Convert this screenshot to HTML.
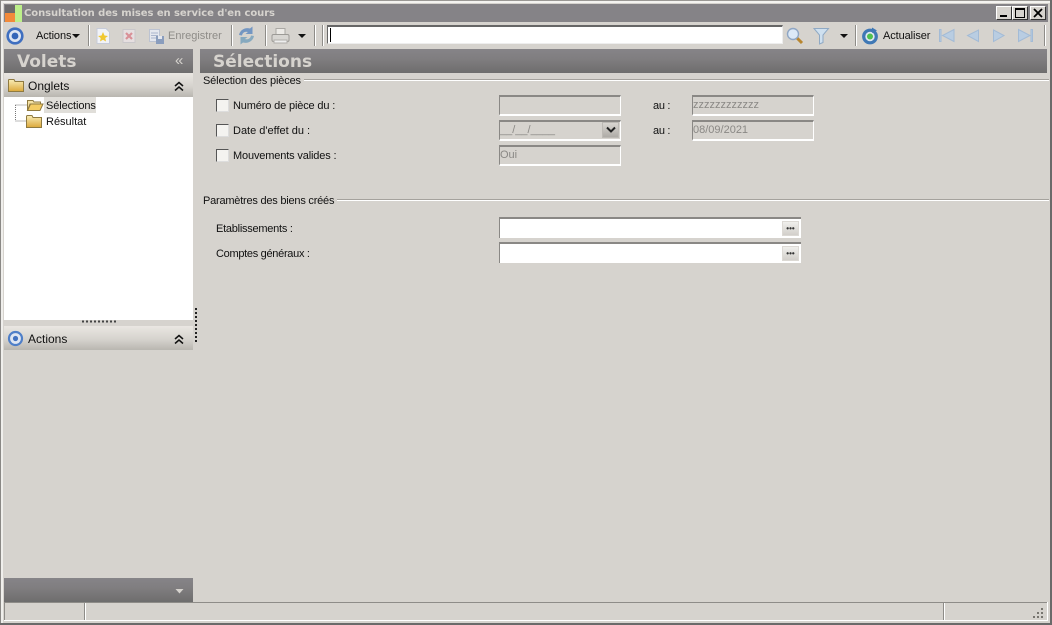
<!DOCTYPE html>
<html><head><meta charset="utf-8"><style>
html,body{margin:0;padding:0}
#r{position:relative;width:1052px;height:625px;overflow:hidden;background:#d6d3ce;font-family:"Liberation Sans",sans-serif;font-size:11px;color:#111}
#r div,#r svg,#r span.t{position:absolute}
.t{white-space:nowrap;line-height:14px}
.sep{top:25px;width:1px;height:21px;background:#8e8c88;border-right:1px solid #fff}
.hd{background:linear-gradient(#868488,#807e80 40%,#6e6d6d)}
.sub{background:linear-gradient(#eae7e2,#d6d3ce 55%,#b9b6b0)}
.ht{font-family:"DejaVu Sans",sans-serif;font-weight:bold;font-size:17px;color:#d6d3ce;line-height:22px;white-space:nowrap}
.in{box-sizing:border-box;background:#d6d3ce;border:1px solid #fff;border-top:2px solid #8a8885;border-left:1px solid #8a8885;border-bottom:2px solid #fff;height:21px;width:122px;color:#8a8885;font-size:11px;line-height:17px;padding-left:0}
.inw{box-sizing:border-box;background:#fff;border-top:2px solid #8a8885;border-left:1px solid #8a8885;height:21px;width:302px}
.cb{box-sizing:border-box;width:13px;height:13px;left:216px;background:#f4f3f0;border:1px solid #555;border-right-color:#ddd;border-bottom-color:#ddd}
.line{height:1px;background:#a5a29d;border-bottom:1px solid #fff}
.bb{width:17px;height:15px;box-sizing:border-box;background:linear-gradient(#f0efec,#d2cfca);border:1px solid #dcd9d4;color:#333;font:bold 8px/14px "Liberation Sans",sans-serif;text-align:center}
</style></head><body><div id="r">
<div style="left:0;top:0;width:1052px;height:1px;background:#9a9894"></div>
<div style="left:0;top:1px;width:1052px;height:2px;background:#f4f3f0"></div>
<div style="left:0;top:0;width:1px;height:625px;background:#8a8885"></div>
<div style="left:1px;top:1px;width:2px;height:622px;background:#f0efec"></div>
<div style="left:1050px;top:0;width:2px;height:625px;background:#6a6a6a"></div>
<div style="left:0;top:623px;width:1052px;height:2px;background:#6a6a6a"></div>

<div style="left:4px;top:4px;width:1044px;height:18px;background:#858387"></div>
<svg style="left:5px;top:5px" width="17" height="17"><rect width="17" height="17" fill="#6d6b6b"/><rect x="10" width="7" height="17" fill="#bdf08a"/><rect y="8" width="10" height="9" fill="#f28a3a"/></svg>
<span class="t" style="left:24px;top:7px;font:bold 10px/14px 'DejaVu Sans',sans-serif;letter-spacing:-.07px;color:#d6d3ce">Consultation des mises en service d'en cours</span>
<div style="left:996px;top:6px;width:16px;height:14px;box-sizing:border-box;background:#d6d3ce;border:1px solid;border-color:#fff #333 #333 #fff"><div style="left:3px;top:8px;width:7px;height:2px;background:#000"></div></div>
<div style="left:1012px;top:6px;width:16px;height:14px;box-sizing:border-box;background:#d6d3ce;border:1px solid;border-color:#fff #333 #333 #fff"><div style="left:2px;top:1px;width:10px;height:10px;box-sizing:border-box;border:1px solid #000;border-top-width:2px"></div></div>
<div style="left:1030px;top:6px;width:16px;height:14px;box-sizing:border-box;background:#d6d3ce;border:1px solid;border-color:#fff #333 #333 #fff"><svg style="left:2px;top:1px" width="10" height="10"><path d="M1 1L9 9M9 1L1 9" stroke="#000" stroke-width="1.800"/></svg></div>

<!-- toolbar -->
<svg style="left:6px;top:27px" width="18" height="18"><circle cx="9" cy="9" r="7.300" fill="#dfe6f2" stroke="#3f6fc0" stroke-width="2.600"/><circle cx="9" cy="9" r="3.400" fill="#3566b8"/></svg>
<span class="t" style="left:36px;top:29px;letter-spacing:-.1px">Actions</span>
<svg style="left:72px;top:34px" width="9" height="5"><path d="M0 0H8L4 4Z" fill="#111"/></svg>
<div class="sep" style="left:88px"></div>
<svg style="left:95px;top:27px" width="16" height="18"><path d="M2 1.500H11L14.500 5V16.500H2Z" fill="#f1f3f8" stroke="#c6cbd8"/><path d="M8 5L9.500 8.500L13 9L10.300 11L11 14.500L8 12.700L5 14.500L5.700 11L3 9L6.500 8.500Z" fill="#f0c832"/></svg>
<svg style="left:121px;top:28px" width="16" height="16"><rect x="2" y="1.500" width="12" height="13" fill="#e6dfe0" stroke="#c9c7ca"/><path d="M5 5L11 11M11 5L5 11" stroke="#d99097" stroke-width="2.200"/></svg>
<svg style="left:148px;top:27px" width="18" height="18"><rect x="1.500" y="2.500" width="10" height="12" fill="#e4e7ef" stroke="#bcc3d2"/><path d="M3 6H10M3 8.500H10M3 11H10" stroke="#aab5cd"/><rect x="8" y="9" width="8" height="8" fill="#8a9dbd"/><rect x="10" y="9" width="4" height="3" fill="#e4e7ef"/></svg>
<span class="t" style="left:168px;top:29px;color:#8e8c88">Enregistrer</span>
<div class="sep" style="left:231px"></div>
<svg style="left:237px;top:26px" width="19" height="19"><path d="M2 9C3 4 8 1 13 2.500L15.500 .5V8H8.500L11 6C8 5 5.500 6.500 5 9.500Z" fill="#7396c2"/><path d="M17 10C16 15 11 18 6 16.500L3.500 18.500V11H10.500L8 13C11 14 13.500 12.500 14 9.500Z" fill="#86a9bf"/></svg>
<div class="sep" style="left:265px"></div>
<svg style="left:271px;top:27px" width="19" height="18"><rect x="5" y="1.500" width="9" height="7" fill="#eceae6" stroke="#aaa8a4"/><rect x="1" y="7.500" width="17" height="7" rx="1.500" fill="#d8d6d2" stroke="#9c9a96"/><rect x="3" y="13" width="13" height="3" fill="#eee" stroke="#b0aeaa"/></svg>
<svg style="left:298px;top:34px" width="9" height="5"><path d="M0 0H8L4 4Z" fill="#111"/></svg>
<div class="sep" style="left:314px"></div>
<div class="sep" style="left:322px"></div>
<div style="left:327px;top:25px;width:456px;height:19px;box-sizing:border-box;background:#fff;border-top:2px solid #666;border-left:1px solid #666;border-right:1px solid #eee;border-bottom:1px solid #eee"><div style="left:2px;top:1px;width:1px;height:14px;background:#000"></div></div>
<svg style="left:786px;top:27px" width="18" height="18"><path d="M10.500 10.500L16 16" stroke="#b8862f" stroke-width="3"/><circle cx="7" cy="7" r="5.500" fill="#dce9f7" stroke="#8fa6c4" stroke-width="1.400"/></svg>
<svg style="left:813px;top:27px" width="17" height="18"><path d="M1 1.500H15.500L10 8V15.500L6.500 17V8Z" fill="#cfe0ef" stroke="#8fa9c4"/></svg>
<svg style="left:840px;top:34px" width="9" height="5"><path d="M0 0H8L4 4Z" fill="#111"/></svg>
<div class="sep" style="left:855px"></div>
<svg style="left:861px;top:27px" width="18" height="18"><circle cx="9" cy="9.500" r="6.300" fill="#dfe8f0" stroke="#3f78b5" stroke-width="3.200"/><circle cx="9" cy="9.500" r="3" fill="#4fc04f"/><path d="M11 .5L16 3.500L11 6Z" fill="#3f78b5"/></svg>
<span class="t" style="left:883px;top:29px;letter-spacing:-.1px">Actualiser</span>
<svg style="left:938px;top:27px" width="100" height="18"><g fill="#b9cde2" stroke="#a3bbd6"><rect x="1.500" y="2.500" width="1.500" height="12"/><path d="M16 2.500V14.500L4.500 8.500Z"/><path d="M40.500 3V14.500L29.500 8.500Z"/><path d="M55.500 3V14.500L66 8.500Z"/><path d="M80.500 2.500V14.500L92 8.500Z"/><rect x="93" y="2.500" width="1.500" height="12"/></g></svg>
<div class="sep" style="left:1044px"></div>

<!-- left -->
<div class="hd" style="left:4px;top:49px;width:189px;height:24px"></div>
<div class="ht" style="left:17px;top:51px">Volets</div>
<span class="t" style="left:175px;top:54px;color:#d6d3ce;font-size:15px">«</span>
<div class="sub" style="left:4px;top:73px;width:189px;height:24px"></div>
<svg style="left:8px;top:78px" width="16" height="14"><defs><linearGradient id="g" x1="0" y1="0" x2="0" y2="1"><stop offset="0" stop-color="#f9eeb8"/><stop offset="1" stop-color="#dca83a"/></linearGradient></defs><path d="M.5 2V13.500H15.500V3.500H7L6 1.500H1Z" fill="url(#g)" stroke="#8f7a40"/></svg>
<span class="t" style="left:28px;top:79px;font-size:12px">Onglets</span>
<svg style="left:174px;top:81px" width="10" height="11"><path d="M1 5L5 1.500L9 5M1 9.500L5 6L9 9.500" fill="none" stroke="#111" stroke-width="1.500"/></svg>
<div style="left:4px;top:97px;width:189px;height:223px;background:#fff"></div>
<svg style="left:15px;top:104px" width="14" height="20"><path d="M.5 1V17M.5 1H12M.5 17H12" stroke="#777" stroke-dasharray="1 1" fill="none"/></svg>
<svg style="left:26px;top:98px" width="18" height="14"><path d="M1.500 2.500H7L8 4H14.500V6H4L1.500 12.500Z" fill="#f5e2a5" stroke="#8f7a40"/><path d="M1.500 12.500L4.500 6H17L14 12.500Z" fill="#f4cc63" stroke="#8f7a40"/></svg>
<div style="left:44px;top:97px;width:52px;height:16px;background:#e0ded9"></div>
<span class="t" style="left:46px;top:99px;letter-spacing:-.1px">Sélections</span>
<svg style="left:26px;top:115px" width="16" height="13"><path d="M.5 1.500V12.500H15.500V2.500H7L6 .5H1Z" fill="url(#g)" stroke="#8f7a40"/></svg>
<span class="t" style="left:46px;top:115px">Résultat</span>
<svg style="left:81px;top:320px" width="36" height="4"><path d="M1 1.500H35" stroke="#444" stroke-width="2" stroke-dasharray="2 2"/></svg>
<svg style="left:195px;top:308px" width="3" height="36"><path d="M1 0V36" stroke="#222" stroke-width="2" stroke-dasharray="2 2"/></svg>
<div class="sub" style="left:4px;top:326px;width:189px;height:24px"></div>
<svg style="left:7px;top:330px" width="17" height="17"><circle cx="8.500" cy="8.500" r="6.500" fill="#dfe6f2" stroke="#4f7fc8" stroke-width="2.200"/><circle cx="8.500" cy="8.500" r="2.600" fill="#4272c0"/></svg>
<span class="t" style="left:28px;top:332px;font-size:12px">Actions</span>
<svg style="left:174px;top:334px" width="10" height="11"><path d="M1 5L5 1.500L9 5M1 9.500L5 6L9 9.500" fill="none" stroke="#111" stroke-width="1.500"/></svg>
<div class="hd" style="left:4px;top:578px;width:189px;height:24px"></div>
<svg style="left:175px;top:589px" width="9" height="5"><path d="M.5 0H8.500L4.500 4.500Z" fill="#d6d3ce"/></svg>

<!-- right -->
<div class="hd" style="left:200px;top:49px;width:847px;height:24px"></div>
<div class="ht" style="left:213px;top:51px">Sélections</div>

<span class="t" style="left:203px;top:74px;letter-spacing:-.15px">Sélection des pièces</span>
<div class="line" style="left:304px;top:79px;width:745px"></div>
<div class="cb" style="top:99px"></div><span class="t" style="left:233px;top:99px;letter-spacing:-.15px">Numéro de pièce du :</span>
<div class="cb" style="top:124px"></div><span class="t" style="left:233px;top:124px">Date d'effet du :</span>
<div class="cb" style="top:149px"></div><span class="t" style="left:233px;top:149px;letter-spacing:-.15px">Mouvements valides :</span>

<div class="in" style="left:499px;top:95px"></div>
<div class="in" style="left:499px;top:120px">__/__/____</div>
<div style="left:602px;top:122px;width:17px;height:16px;box-sizing:border-box;background:linear-gradient(#d8d5d0,#aeaba6);border:1px solid #bcb9b4"><svg style="left:3px;top:3px" width="10" height="8"><path d="M1 1.500L5 5.500L9 1.500" fill="none" stroke="#222" stroke-width="2"/></svg></div>
<div class="in" style="left:499px;top:145px">Oui</div>
<span class="t" style="left:653px;top:99px;letter-spacing:-.3px">au :</span>
<span class="t" style="left:653px;top:124px;letter-spacing:-.3px">au :</span>
<div class="in" style="left:692px;top:95px">zzzzzzzzzzzz</div>
<div class="in" style="left:692px;top:120px">08/09/2021</div>

<span class="t" style="left:203px;top:194px;letter-spacing:-.22px">Paramètres des biens créés</span>
<div class="line" style="left:337px;top:199px;width:712px"></div>
<span class="t" style="left:216px;top:222px;letter-spacing:-.25px">Etablissements :</span>
<span class="t" style="left:216px;top:247px;letter-spacing:-.3px">Comptes généraux :</span>
<div class="inw" style="left:499px;top:217px"></div>
<div class="inw" style="left:499px;top:242px"></div>
<div class="bb" style="left:782px;top:221px">•••</div>
<div class="bb" style="left:782px;top:246px">•••</div>

<!-- status -->
<div style="left:4px;top:602px;width:1044px;height:1px;background:#8e8c88"></div>
<div style="left:4px;top:603px;width:1px;height:18px;background:#8e8c88"></div>
<div style="left:84px;top:603px;width:1px;height:18px;background:#8e8c88;border-right:1px solid #fff"></div>
<div style="left:943px;top:603px;width:1px;height:18px;background:#8e8c88;border-right:1px solid #fff"></div>
<div style="left:4px;top:620px;width:1044px;height:1px;background:#fff"></div>
<div style="left:1047px;top:602px;width:1px;height:19px;background:#fff"></div>
<svg style="left:1032px;top:608px" width="13" height="12"><g fill="#77756f"><rect x="9" y="0" width="2" height="2"/><rect x="5" y="4" width="2" height="2"/><rect x="9" y="4" width="2" height="2"/><rect x="1" y="8" width="2" height="2"/><rect x="5" y="8" width="2" height="2"/><rect x="9" y="8" width="2" height="2"/></g></svg>
</div></body></html>
